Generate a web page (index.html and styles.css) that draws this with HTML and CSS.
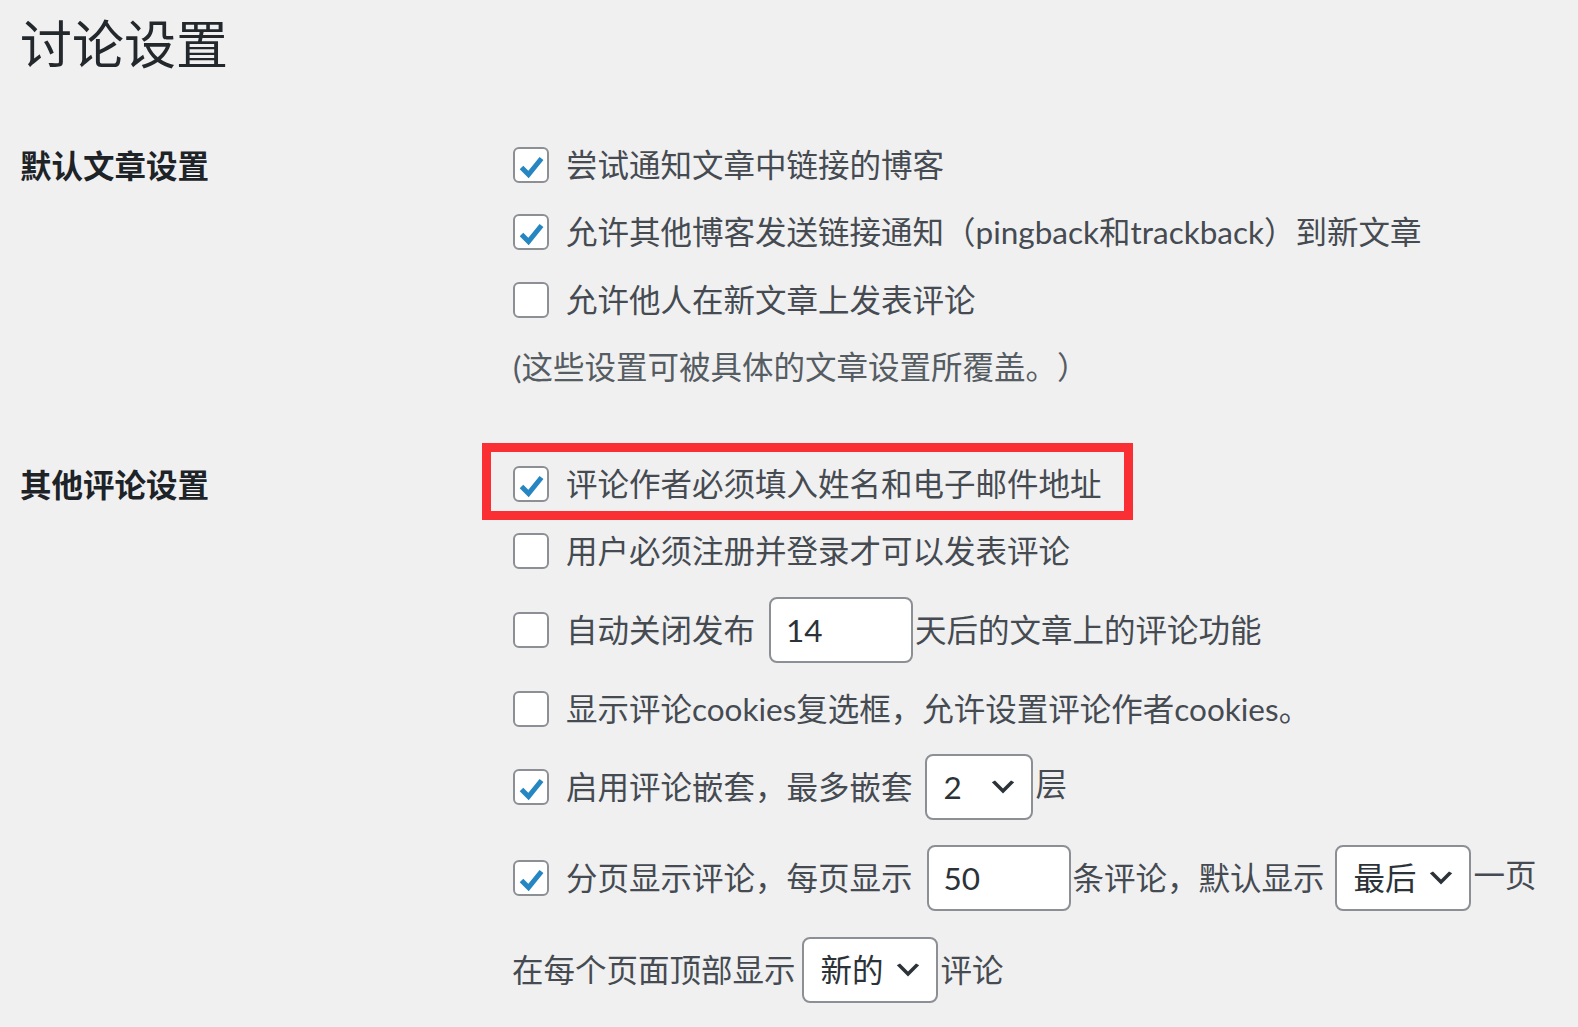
FILE: index.html
```html
<!DOCTYPE html>
<html lang="zh-CN">
<head>
  <meta charset="UTF-8">
  <meta name="viewport" content="width=device-width, initial-scale=1.0">
  <title>讨论设置</title>
  <link rel="stylesheet" href="styles.css">
</head>
<body>
  <h1>讨论设置</h1>

  <div class="form-table">
    <div class="th">默认文章设置</div>
    <div class="fieldset">
      <div class="opt">
        <span class="cb"><svg viewBox="0 0 32 32"><path d="M6.5 18.5l7 7 13-16"/></svg></span>
        <span>尝试通知文章中链接的博客</span>
      </div>
      <div class="opt">
        <span class="cb"><svg viewBox="0 0 32 32"><path d="M6.5 18.5l7 7 13-16"/></svg></span>
        <span>允许其他博客发送链接通知（pingback和trackback）到新文章</span>
      </div>
      <div class="opt">
        <span class="cb"></span>
        <span>允许他人在新文章上发表评论</span>
      </div>
      <div class="opt">
        <span class="description">(这些设置可被具体的文章设置所覆盖。）</span>
      </div>
    </div>

    <div class="th">其他评论设置</div>
    <div class="fieldset">
      <div class="opt">
        <span class="mark"></span>
        <span class="cb"><svg viewBox="0 0 32 32"><path d="M6.5 18.5l7 7 13-16"/></svg></span>
        <span>评论作者必须填入姓名和电子邮件地址</span>
      </div>
      <div class="opt">
        <span class="cb"></span>
        <span>用户必须注册并登录才可以发表评论</span>
      </div>
      <div class="opt opt-field">
        <span class="cb"></span>
        <span>自动关闭发布</span>
        <span class="input">14</span>
        <span>天后的文章上的评论功能</span>
      </div>
      <div class="opt">
        <span class="cb"></span>
        <span>显示评论cookies复选框，允许设置评论作者cookies。</span>
      </div>
      <div class="opt opt-select">
        <span class="cb"><svg viewBox="0 0 32 32"><path d="M6.5 18.5l7 7 13-16"/></svg></span>
        <span>启用评论嵌套，最多嵌套</span>
        <span class="select select-sm">2<svg viewBox="0 0 20 20"><path d="M5 6l5 5 5-5 2 1-7 7-7-7z"/></svg></span>
        <span class="raised">层</span>
      </div>
      <div class="opt opt-tall">
        <span class="cb"><svg viewBox="0 0 32 32"><path d="M6.5 18.5l7 7 13-16"/></svg></span>
        <span>分页显示评论，每页显示</span>
        <span class="input">50</span>
        <span>条评论，默认显示</span>
        <span class="select select-gap">最后<svg viewBox="0 0 20 20"><path d="M5 6l5 5 5-5 2 1-7 7-7-7z"/></svg></span>
        <span class="raised">一页</span>
      </div>
      <div class="opt opt-select">
        <span>在每个页面顶部显示</span>
        <span class="select select-tight">新的<svg viewBox="0 0 20 20"><path d="M5 6l5 5 5-5 2 1-7 7-7-7z"/></svg></span>
        <span>评论</span>
      </div>
    </div>
  </div>
</body>
</html>
```

FILE: styles.css
```css
body {
  margin: 0;
  padding: 11px 20px 0;
  background-color: #f0f0f1;
  color: #454b51;
  font-family: Lato, "Noto Sans CJK SC", sans-serif;
  font-size: 31.5px;
  text-spacing-trim: space-all;
}
h1 {
  margin: 0;
  font-size: 52px;
  line-height: 66px;
  font-weight: 400;
  color: #23282d;
}
.form-table {
  margin-top: 54px;
  display: grid;
  grid-template-columns: 492px 1fr;
  row-gap: 49px;
}
.th {
  padding-top: 15px;
  line-height: 40px;
  font-weight: 700;
  color: #1d2327;
}
.fieldset {
  display: flex;
  flex-direction: column;
}
.opt {
  position: relative;
  display: flex;
  align-items: center;
  height: 67.5px;
  line-height: 40px;
  white-space: nowrap;
}
.opt-field {
  height: 90px;
}
.opt-select {
  height: 88px;
}
.opt-tall {
  height: 95px;
}
.cb {
  flex: none;
  box-sizing: border-box;
  width: 36px;
  height: 36px;
  margin: 0 17px 0 1px;
  border: 2px solid #8c8f94;
  border-radius: 6px;
  background-color: #fff;
}
.cb svg {
  display: block;
  width: 32px;
  height: 32px;
  fill: none;
  stroke: #2586c2;
  stroke-width: 5;
}
.description {
  margin-left: 1px;
  color: #555c62;
}
.input {
  flex: none;
  box-sizing: border-box;
  width: 144px;
  height: 66px;
  margin: 0 2px 0 14px;
  padding-left: 15px;
  display: flex;
  align-items: center;
  border: 2px solid #8c8f94;
  border-radius: 8px;
  background-color: #fff;
  color: #2c3338;
}
.select {
  flex: none;
  box-sizing: border-box;
  width: 136px;
  height: 66px;
  margin: 0 3px 0 12px;
  padding: 0 12px 0 17px;
  display: flex;
  align-items: center;
  justify-content: space-between;
  border: 2px solid #8c8f94;
  border-radius: 8px;
  background-color: #fff;
  color: #2c3338;
}
.select svg {
  width: 32px;
  height: 32px;
  fill: #2c3338;
}
.select-sm {
  width: 108px;
}
.select-gap {
  margin-left: 10px;
}
.select-tight {
  margin-left: 6px;
}
.raised {
  position: relative;
  top: -3px;
}
.mark {
  position: absolute;
  left: -30px;
  top: -7px;
  width: 651px;
  height: 77px;
  box-sizing: border-box;
  border: 9px solid #f92f33;
}
```
